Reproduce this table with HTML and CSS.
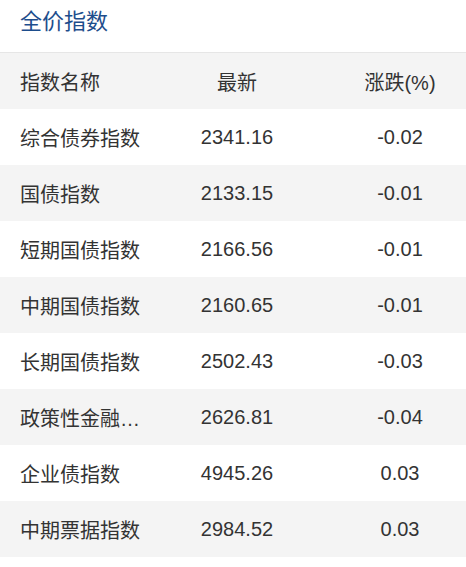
FILE: index.html
```html
<!DOCTYPE html>
<html lang="zh">
<head>
<meta charset="utf-8">
<title>全价指数</title>
<link rel="stylesheet" href="styles.css">
</head>
<body>
<div class="panel">
  <h2 class="title">全价指数</h2>
  <div class="table">
    <div class="row head">
      <div class="c name">指数名称</div>
      <div class="c val">最新</div>
      <div class="c chg">涨跌(%)</div>
    </div>
    <div class="row">
      <div class="c name">综合债券指数</div>
      <div class="c val">2341.16</div>
      <div class="c chg">-0.02</div>
    </div>
    <div class="row">
      <div class="c name">国债指数</div>
      <div class="c val">2133.15</div>
      <div class="c chg">-0.01</div>
    </div>
    <div class="row">
      <div class="c name">短期国债指数</div>
      <div class="c val">2166.56</div>
      <div class="c chg">-0.01</div>
    </div>
    <div class="row">
      <div class="c name">中期国债指数</div>
      <div class="c val">2160.65</div>
      <div class="c chg">-0.01</div>
    </div>
    <div class="row">
      <div class="c name">长期国债指数</div>
      <div class="c val">2502.43</div>
      <div class="c chg">-0.03</div>
    </div>
    <div class="row">
      <div class="c name" title="政策性金融债指数">政策性金融…</div>
      <div class="c val">2626.81</div>
      <div class="c chg">-0.04</div>
    </div>
    <div class="row">
      <div class="c name">企业债指数</div>
      <div class="c val">4945.26</div>
      <div class="c chg">0.03</div>
    </div>
    <div class="row">
      <div class="c name">中期票据指数</div>
      <div class="c val">2984.52</div>
      <div class="c chg">0.03</div>
    </div>
  </div>
</div>
</body>
</html>
```
FILE: styles.css
```css
html, body {
  margin: 0;
  padding: 0;
  background: #ffffff;
}
body {
  font-family: "Liberation Sans", "Noto Sans CJK SC", sans-serif;
  color: #333333;
}
.panel {
  width: 466px;
}
.title {
  margin: 0;
  height: 53px;
  box-sizing: border-box;
  padding: 8px 20px 0;
  font-size: 22px;
  line-height: 28px;
  font-weight: normal;
  color: #1d4d8c;
  border-bottom: 1px solid #e6e6e6;
}
.table {
  display: flex;
  flex-direction: column;
}
.row {
  display: grid;
  grid-template-columns: 140px 194px 132px;
  height: 56px;
  align-items: center;
  font-size: 20px;
  background: #ffffff;
}
.row:nth-child(odd) {
  background: #f4f4f4;
}
.c {
  white-space: nowrap;
}
.name {
  padding-left: 20px;
}
.val, .chg {
  text-align: center;
}
```
